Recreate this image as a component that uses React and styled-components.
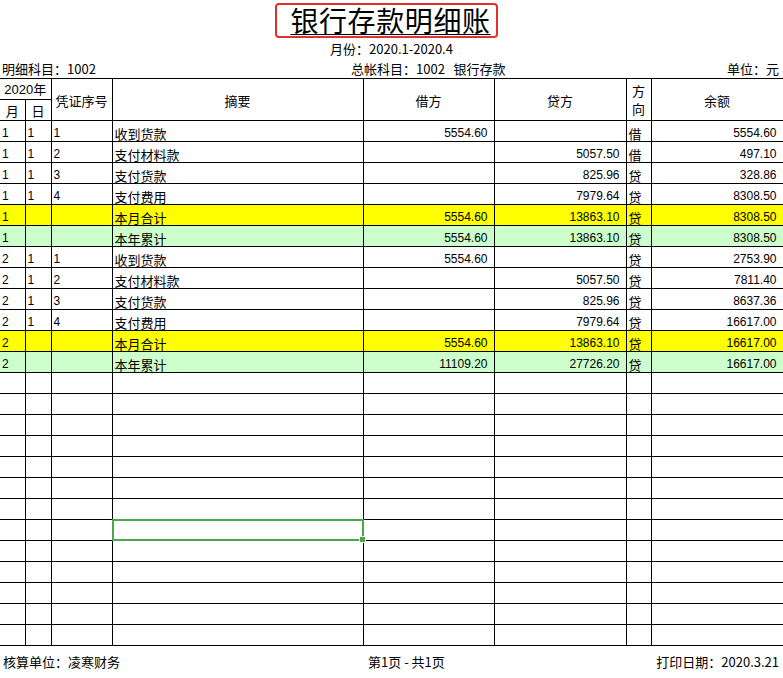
import styled, { createGlobalStyle } from 'styled-components'

const GlobalStyle = createGlobalStyle`
  body {
    margin: 0;
    background: #fff;
    color: #000;
    font-family: "Noto Sans CJK SC", sans-serif;
  }
`

const rows = [
  { m: '1', d: '1', no: '1', text: '收到货款', debit: '5554.60', credit: '', dir: '借', bal: '5554.60' },
  { m: '1', d: '1', no: '2', text: '支付材料款', debit: '', credit: '5057.50', dir: '借', bal: '497.10' },
  { m: '1', d: '1', no: '3', text: '支付货款', debit: '', credit: '825.96', dir: '贷', bal: '328.86' },
  { m: '1', d: '1', no: '4', text: '支付费用', debit: '', credit: '7979.64', dir: '贷', bal: '8308.50' },
  { m: '1', d: '', no: '', text: '本月合计', debit: '5554.60', credit: '13863.10', dir: '贷', bal: '8308.50', kind: 'month' },
  { m: '1', d: '', no: '', text: '本年累计', debit: '5554.60', credit: '13863.10', dir: '贷', bal: '8308.50', kind: 'year' },
  { m: '2', d: '1', no: '1', text: '收到货款', debit: '5554.60', credit: '', dir: '贷', bal: '2753.90' },
  { m: '2', d: '1', no: '2', text: '支付材料款', debit: '', credit: '5057.50', dir: '贷', bal: '7811.40' },
  { m: '2', d: '1', no: '3', text: '支付货款', debit: '', credit: '825.96', dir: '贷', bal: '8637.36' },
  { m: '2', d: '1', no: '4', text: '支付费用', debit: '', credit: '7979.64', dir: '贷', bal: '16617.00' },
  { m: '2', d: '', no: '', text: '本月合计', debit: '5554.60', credit: '13863.10', dir: '贷', bal: '16617.00', kind: 'month' },
  { m: '2', d: '', no: '', text: '本年累计', debit: '11109.20', credit: '27726.20', dir: '贷', bal: '16617.00', kind: 'year' },
]

const EMPTY_ROWS = 13
const SELECTED_EMPTY = 7

const rowColors = { month: '#ffff00', year: '#ccffcc' }

const App = () => {
  return (
    <Page>
      <GlobalStyle />
      <TitleRow>
        <TitleBox>银行存款明细账</TitleBox>
      </TitleRow>
      <Period>月份：2020.1-2020.4</Period>
      <InfoRow>
        <span>明细科目：1002</span>
        <span>总帐科目：1002&nbsp;&nbsp;&nbsp;银行存款</span>
        <InfoRight>单位：元</InfoRight>
      </InfoRow>

      <Ledger>
        <colgroup>
          <col style={{ width: 25 }} />
          <col style={{ width: 26 }} />
          <col style={{ width: 61 }} />
          <col style={{ width: 251 }} />
          <col style={{ width: 131 }} />
          <col style={{ width: 132 }} />
          <col style={{ width: 25 }} />
          <col style={{ width: 132 }} />
        </colgroup>
        <thead>
          <HeadRow>
            <HeadCell colSpan={2} $num>2020年</HeadCell>
            <HeadCell rowSpan={2} $middle>凭证序号</HeadCell>
            <HeadCell rowSpan={2} $middle>摘要</HeadCell>
            <HeadCell rowSpan={2} $middle>借方</HeadCell>
            <HeadCell rowSpan={2} $middle>贷方</HeadCell>
            <HeadCell rowSpan={2} $middle $stack>方<br />向</HeadCell>
            <HeadCell rowSpan={2} $middle>余额</HeadCell>
          </HeadRow>
          <HeadRow>
            <HeadCell>月</HeadCell>
            <HeadCell>日</HeadCell>
          </HeadRow>
        </thead>
        <tbody>
          {rows.map((r, i) => (
            <Row key={i} $bg={rowColors[r.kind]}>
              <NumCell $left>{r.m}</NumCell>
              <NumCell $left>{r.d}</NumCell>
              <NumCell $left>{r.no}</NumCell>
              <TextCell>{r.text}</TextCell>
              <NumCell>{r.debit}</NumCell>
              <NumCell>{r.credit}</NumCell>
              <TextCell>{r.dir}</TextCell>
              <NumCell>{r.bal}</NumCell>
            </Row>
          ))}
          {Array.from({ length: EMPTY_ROWS }).map((_, i) => (
            <Row key={'e' + i}>
              <TextCell />
              <TextCell />
              <TextCell />
              <TextCell>
                {i === SELECTED_EMPTY && (
                  <Selection>
                    <Handle />
                  </Selection>
                )}
              </TextCell>
              <TextCell />
              <TextCell />
              <TextCell />
              <TextCell />
            </Row>
          ))}
        </tbody>
      </Ledger>

      <Footer>
        <span>核算单位：凌寒财务</span>
        <span>第1页 - 共1页</span>
        <FooterRight>打印日期：2020.3.21</FooterRight>
      </Footer>
    </Page>
  )
}

// styled components -------
const Page = styled.div`
  width: 783px;
  padding-top: 3px;
`

const TitleRow = styled.div`
  display: flex;
  justify-content: center;
  padding-right: 10px;
`

const TitleBox = styled.div`
  box-sizing: border-box;
  height: 35px;
  padding: 0 5px 0 13px;
  border: 2.5px solid #e3302b;
  border-radius: 4px;
  font-size: 28px;
  line-height: 30px;
  letter-spacing: 0.6px;
  text-decoration: underline;
  text-decoration-thickness: 1px;
  text-underline-offset: 2px;
`

const Period = styled.div`
  height: 21px;
  text-align: center;
  font-size: 13px;
  line-height: 21px;
`

const InfoRow = styled.div`
  display: grid;
  grid-template-columns: 349px 1fr auto;
  height: 19px;
  padding: 0 4px 0 2px;
  font-size: 13px;
  line-height: 19px;
`

const InfoRight = styled.span`
  text-align: right;
`

const Ledger = styled.table`
  width: 783px;
  table-layout: fixed;
  border-collapse: collapse;
  border-left: none;

  td,
  th {
    border: 1px solid #000;
  }
  td:first-child,
  th:first-child {
    border-left: none;
  }
`

const HeadRow = styled.tr`
  height: 21px;
`

const HeadCell = styled.th`
  padding: ${(p) => (p.$stack ? '1px 0 0' : p.$middle ? '3px 0 0' : '0 0 1px')};
  font-weight: normal;
  font-size: 13px;
  line-height: ${(p) => (p.$stack ? '18px' : '16px')};
  text-align: center;
  vertical-align: ${(p) => (p.$middle ? 'middle' : 'bottom')};
  font-family: ${(p) =>
    p.$num ? '"Liberation Sans", "Noto Sans CJK SC", sans-serif' : '"Noto Sans CJK SC", sans-serif'};
`

const Row = styled.tr`
  height: 21px;
  background: ${(p) => p.$bg || '#fff'};
`

const TextCell = styled.td`
  position: relative;
  padding: 0 2px;
  font-size: 13px;
  line-height: 15px;
  vertical-align: bottom;
  white-space: nowrap;
`

const NumCell = styled.td`
  padding: ${(p) => (p.$left ? '0 2px' : '0 6px 0 2px')};
  font-family: "Liberation Sans", Arial, sans-serif;
  font-size: 12px;
  line-height: 15px;
  text-align: ${(p) => (p.$left ? 'left' : 'right')};
  vertical-align: bottom;
  white-space: nowrap;
`

const Selection = styled.div`
  position: absolute;
  top: -1px;
  left: -1px;
  right: -1px;
  bottom: -1px;
  border: 2px solid #4ca64c;
`

const Handle = styled.div`
  position: absolute;
  right: -4px;
  bottom: -4px;
  width: 5px;
  height: 5px;
  background: #4ca64c;
  border: 1px solid #fff;
`

const Footer = styled.div`
  display: grid;
  grid-template-columns: 365px auto 1fr;
  margin-top: 8px;
  padding: 0 4px 0 3px;
  font-size: 13px;
  line-height: 16px;
`

const FooterRight = styled.span`
  text-align: right;
`
//--------------------
export default App
